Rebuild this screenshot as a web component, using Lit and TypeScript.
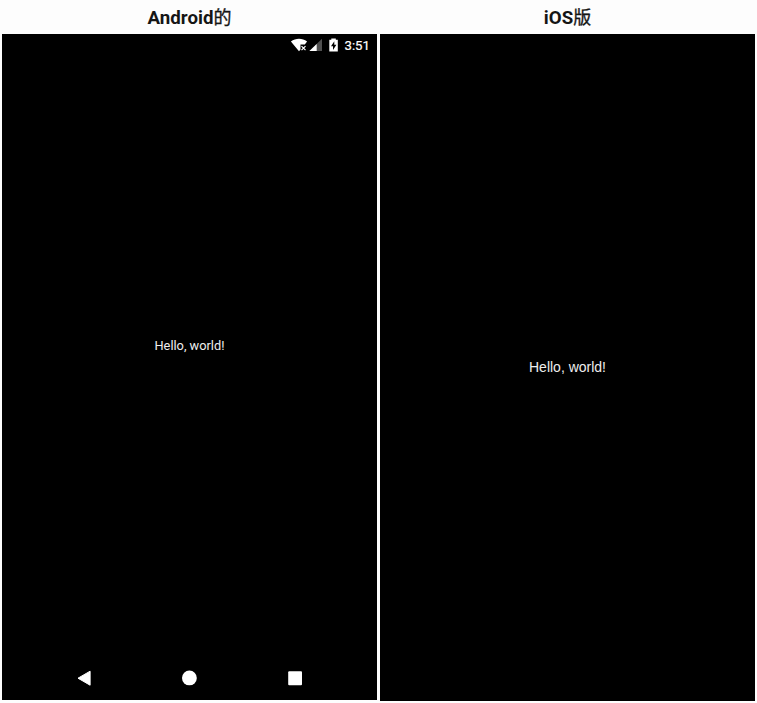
import { LitElement, html, css } from "lit";
import { customElement } from "lit/decorators.js";

@customElement("app-root")
class AppRoot extends LitElement {
  static styles = css`
    :host { display: block; width: 757px; height: 703px; background: #fdfdfd; overflow: hidden; }
    .columns { display: grid; grid-template-columns: 375px 375px; column-gap: 3px; padding-left: 2px; }
    .title { box-sizing: border-box; height: 34px; margin: 0; padding-top: 2px; display: flex; align-items: center; justify-content: center;
      font: 700 18.7px/32px Roboto, "Noto Sans CJK SC", sans-serif; color: #151515; white-space: nowrap; }
    .cjk { font-size: 18px; line-height: 28px; margin-bottom: 4px; font-weight: 400; font-family: "Noto Sans CJK SC", sans-serif; -webkit-text-stroke: 0.3px #151515; }
    .screen { background: #000; color: #fff; display: flex; flex-direction: column; }
    .android { height: 666px; }
    .ios { height: 667px; align-items: center; justify-content: center; }
    .status { height: 22px; display: flex; justify-content: flex-end; padding-right: 8px; }
    .status svg { display: block; }
    .time { font: 400 13.2px/23px Roboto, sans-serif; width: 24px; margin-left: -0.5px; padding-right: 0.5px; white-space: nowrap; -webkit-text-stroke: 0.2px #fff; }
    .body { flex: 1; display: flex; align-items: center; justify-content: center; padding-bottom: 22px; }
    .nav { height: 43px; }
    .nav svg { display: block; }
    .hello { white-space: nowrap; }
    .android .hello { font: 400 12.8px/16px Roboto, sans-serif; color: #eee; }
    .ios .hello { font: 400 14px/17px "Liberation Sans", Arial, sans-serif; color: #eee; }
  `;

  render() {
    return html`
      <div class="columns">
        <section>
          <h2 class="title">Android<span class="cjk">的</span></h2>
          <div class="screen android">
            <div class="status">
              <svg width="55" height="22" viewBox="0 0 55 22" fill="#fff">
                <path d="M.9 7.5C5.7 3.7 12.3 3.7 17.1 7.5L14.8 10.5H10.5V15.6L9 17.3Z" />
                <path d="M11.5 12.2l4 4M15.5 12.2l-4 4" fill="none" stroke="#fff" stroke-width="1.2" />
                <path d="M32 4.7V17H19.4Z" fill="#505050" />
                <path d="M26.7 9.9V17H19.4Z" />
                <path d="M39.3 5.8h2V4.6h4.5v1.2h2V17.5h-8.5Z" />
                <path d="M44.3 7.2L41 12.2h2v3.7l3.4-5.1h-2.1Z" fill="#000" />
              </svg>
              <span class="time">3:51</span>
            </div>
            <div class="body"><span class="hello">Hello, world!</span></div>
            <div class="nav">
              <svg width="375" height="43" viewBox="0 0 375 43" fill="#fff">
                <path d="M76 21.2L88.1 14.2V28.2Z" stroke="#fff" stroke-width="1" stroke-linejoin="round" />
                <circle cx="187.4" cy="20.9" r="7.4" />
                <rect x="286.2" y="14.3" width="13.8" height="14" rx="1" />
              </svg>
            </div>
          </div>
        </section>
        <section>
          <h2 class="title">iOS<span class="cjk">版</span></h2>
          <div class="screen ios"><span class="hello">Hello, world!</span></div>
        </section>
      </div>
    `;
  }
}
